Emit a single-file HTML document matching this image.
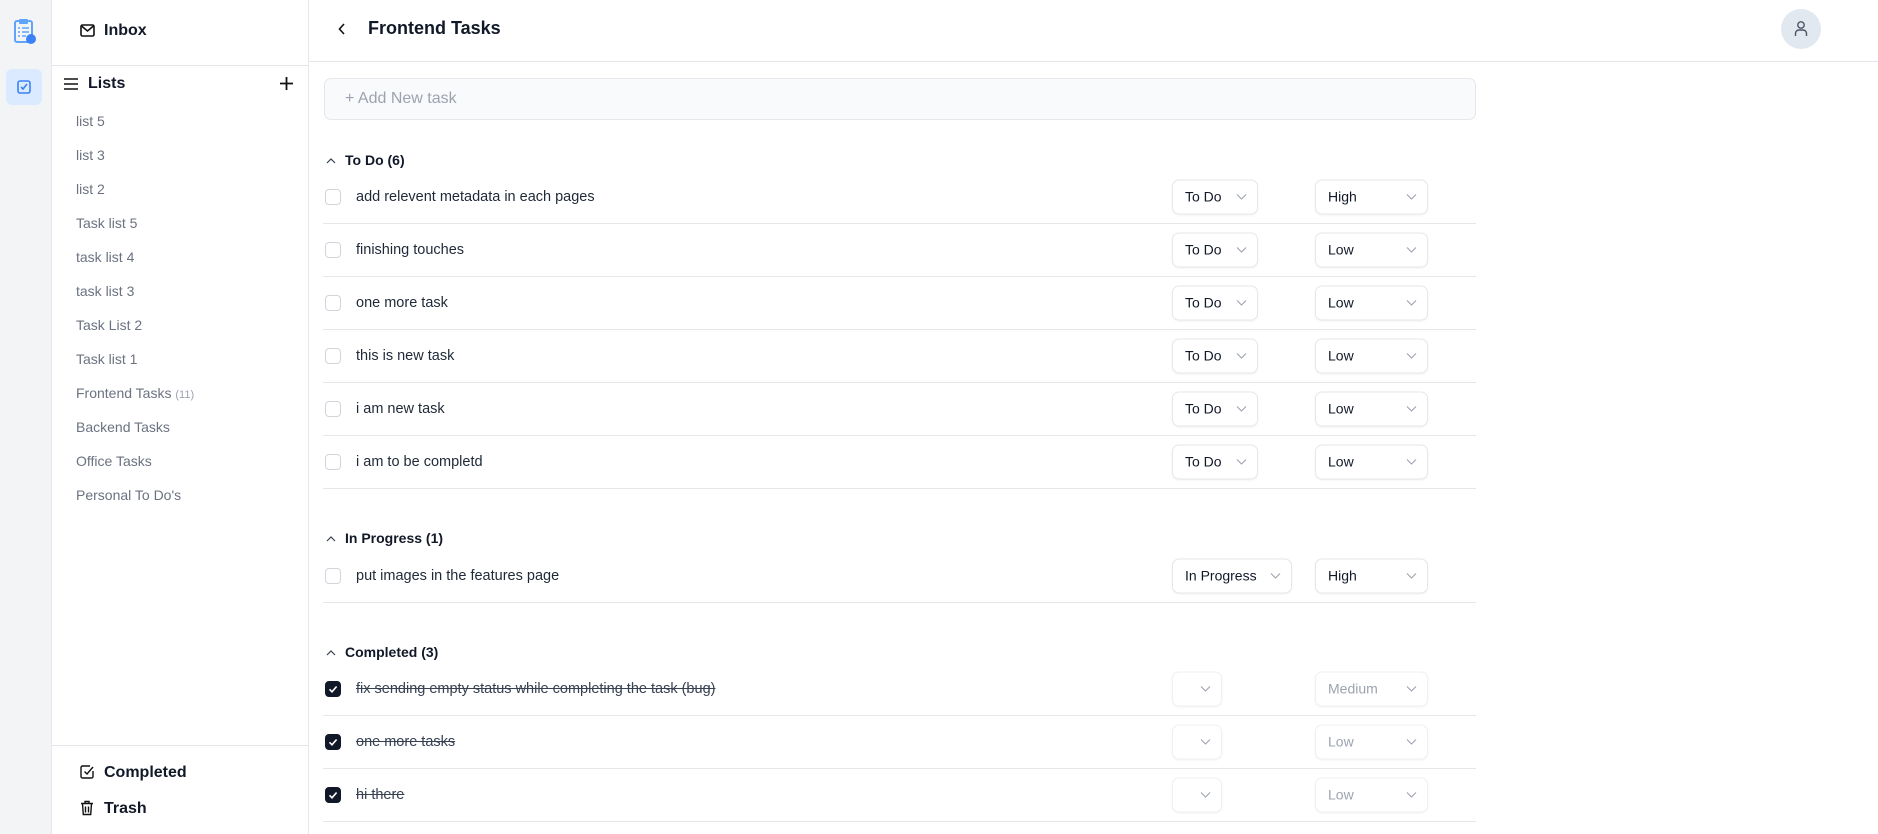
<!DOCTYPE html>
<html><head><meta charset="utf-8"><style>
*{box-sizing:border-box;margin:0;padding:0}
body{width:1878px;height:834px;overflow:hidden;background:#fff;font-family:"Liberation Sans",sans-serif;color:#111827;position:relative}
.abs{position:absolute}
.rail{left:0;top:0;width:52px;height:834px;background:#f3f4f6;border-right:1px solid #e5e7eb}
.side{left:52px;top:0;width:257px;height:834px;border-right:1px solid #e5e7eb;background:#fff}
.li{position:absolute;left:76px;font-size:14px;color:#6b7280;transform:translateY(-50%)}
.hr{position:absolute;height:1px;background:#e5e7eb}
.row{position:absolute;left:323px;width:1153px;height:53px}
.cb{position:absolute;left:2px;width:16px;height:16px;border:1px solid #d1d5db;border-radius:4px;top:50%;transform:translateY(-50%)}
.cb.on{background:#111827;border-color:#111827}
.txt{position:absolute;left:33px;top:50%;transform:translateY(-50%);font-size:14.5px;color:#1f2937}
.txt.done{text-decoration:line-through;color:#374151}
.sel{position:absolute;top:50%;transform:translateY(-50%);height:35px;border:1px solid #e5e7eb;border-radius:7px;font-size:14px;padding-left:12px;line-height:33px;box-shadow:0 1px 2px rgba(0,0,0,.05)}
.sel svg{position:absolute;right:10px;top:13px}
.sel.dim{color:#9ca3af;border-color:#eef0f2}
.gh{position:absolute;left:326px;font-size:14px;font-weight:bold;transform:translateY(-50%)}
.gh svg{margin-right:9px;vertical-align:1px}
</style></head><body>
<div class="abs rail"></div>
<svg class="abs" style="left:13px;top:17px" width="24" height="28" viewBox="0 0 24 28"><rect x="2" y="4" width="17" height="21" rx="2" fill="none" stroke="#60a5fa" stroke-width="2"/><rect x="6" y="2" width="9" height="5" rx="1" fill="#60a5fa"/><path d="M5 11h2M9 11h7M5 15h2M9 15h7M5 19h2M9 19h4" stroke="#60a5fa" stroke-width="1.5"/><circle cx="18" cy="22" r="5" fill="#3b82f6"/></svg>
<div class="abs" style="left:6px;top:69px;width:36px;height:36px;border-radius:6px;background:#dbeafe"></div>
<svg class="abs" style="left:16px;top:79px" width="16" height="16" viewBox="0 0 16 16"><rect x="2" y="2" width="12" height="12" rx="2" fill="none" stroke="#3b82f6" stroke-width="1.6"/><path d="M5 8l2 2 4-5" fill="none" stroke="#3b82f6" stroke-width="1.6"/></svg>
<div class="abs side"></div>
<svg class="abs" style="left:80px;top:24px" width="15" height="13" viewBox="0 0 15 13"><rect x="1" y="1" width="13" height="11" rx="1.5" fill="none" stroke="#111" stroke-width="1.6"/><path d="M1.5 2l6 5 6-5" fill="none" stroke="#111" stroke-width="1.6"/></svg>
<div class="abs" style="left:104px;top:22px;font-size:16px;font-weight:bold">Inbox</div>
<div class="hr" style="left:52px;top:65px;width:257px"></div>
<svg class="abs" style="left:64px;top:78px" width="14" height="12"><path d="M0 1h14M0 6h14M0 11h14" stroke="#111" stroke-width="1.6"/></svg>
<div class="abs" style="left:88px;top:75px;font-size:16px;font-weight:bold">Lists</div>
<svg class="abs" style="left:280px;top:77px" width="13" height="13"><path d="M6.5 0v13M0 6.5h13" stroke="#111" stroke-width="1.8"/></svg>
<div class="li" style="top:121px">list 5</div>
<div class="li" style="top:155px">list 3</div>
<div class="li" style="top:189px">list 2</div>
<div class="li" style="top:223px">Task list 5</div>
<div class="li" style="top:257px">task list 4</div>
<div class="li" style="top:291px">task list 3</div>
<div class="li" style="top:325px">Task List 2</div>
<div class="li" style="top:359px">Task list 1</div>
<div class="li" style="top:393px">Frontend Tasks <span style="font-size:11px;color:#9ca3af">(11)</span></div>
<div class="li" style="top:427px">Backend Tasks</div>
<div class="li" style="top:461px">Office Tasks</div>
<div class="li" style="top:495px">Personal To Do's</div>
<div class="hr" style="left:52px;top:745px;width:257px"></div>
<svg class="abs" style="left:80px;top:764px" width="15" height="15" viewBox="0 0 15 15"><path d="M13 7v5.5a1.5 1.5 0 0 1-1.5 1.5h-9A1.5 1.5 0 0 1 1 12.5v-9A1.5 1.5 0 0 1 2.5 2H10" fill="none" stroke="#111" stroke-width="1.4"/><path d="M4.5 7.5l2.5 2.5 6-7" fill="none" stroke="#111" stroke-width="1.4"/></svg>
<div class="abs" style="left:104px;top:764px;font-size:16px;font-weight:bold">Completed</div>
<svg class="abs" style="left:80px;top:800px" width="14" height="16" viewBox="0 0 14 16"><path d="M1 3.5h12M5 3.5V1.5h4v2M2.5 3.5l.8 11h7.4l.8-11M5.5 6.5v6M8.5 6.5v6" fill="none" stroke="#111" stroke-width="1.4"/></svg>
<div class="abs" style="left:104px;top:800px;font-size:16px;font-weight:bold">Trash</div>
<svg class="abs" style="left:338px;top:23px" width="8" height="12"><path d="M6 1L1.5 6 6 11" fill="none" stroke="#111" stroke-width="1.6"/></svg>
<div class="abs" style="left:368px;top:18px;font-size:18px;font-weight:bold">Frontend Tasks</div>
<div class="hr" style="left:309px;top:61px;width:1569px"></div>
<div class="abs" style="left:1781px;top:9px;width:40px;height:40px;border-radius:50%;background:#e2e8f0"></div>
<svg class="abs" style="left:1792px;top:20px" width="18" height="18" viewBox="0 0 18 18"><circle cx="9" cy="5" r="3.2" fill="none" stroke="#4b5563" stroke-width="1.4"/><path d="M3.5 16v-2.5a3.5 3.5 0 0 1 3.5-3.5h4a3.5 3.5 0 0 1 3.5 3.5V16" fill="none" stroke="#4b5563" stroke-width="1.4"/></svg>
<div class="abs" style="left:324px;top:78px;width:1152px;height:42px;border:1px solid #e5e7eb;border-radius:7px;background:#f9fafb;font-size:16px;color:#9ca3af;padding:11px 0 0 20px">+ Add New task</div>

<div class="gh" style="top:160px"><svg width="10" height="6"><path d="M1 5l4-4 4 4" fill="none" stroke="#374151" stroke-width="1.2"/></svg>To Do (6)</div>
<div class="gh" style="top:538px"><svg width="10" height="6"><path d="M1 5l4-4 4 4" fill="none" stroke="#374151" stroke-width="1.2"/></svg>In Progress (1)</div>
<div class="gh" style="top:652px"><svg width="10" height="6"><path d="M1 5l4-4 4 4" fill="none" stroke="#374151" stroke-width="1.2"/></svg>Completed (3)</div>

<div id="rows"></div>
<script>
var ch='<svg width="11" height="7"><path d="M1 1l4.5 4.5L10 1" fill="none" stroke="#9ca3af" stroke-width="1.1"/></svg>';
var R=[[196,"add relevent metadata in each pages","To Do","High",0],[249,"finishing touches","To Do","Low",0],[302,"one more task","To Do","Low",0],[355,"this is new task","To Do","Low",0],[408,"i am new task","To Do","Low",0],[461,"i am to be completd","To Do","Low",0],[575,"put images in the features page","In Progress","High",0],[688,"fix sending empty status while completing the task (bug)","","Medium",1],[741,"one more tasks","","Low",1],[794,"hi there","","Low",1]];
var h='';
R.forEach(function(r){
var sw=r[2]=="In Progress"?120:(r[4]?50:86);
h+='<div class="row" style="top:'+(r[0]-26)+'px"><div class="cb'+(r[4]?' on':'')+'">'+(r[4]?'<svg width="14" height="14" style="position:absolute;left:0;top:0"><path d="M3.5 7.3l2.5 2.5 4.6-5.3" fill="none" stroke="#fff" stroke-width="1.6"/></svg>':'')+'</div><div class="txt'+(r[4]?' done':'')+'">'+r[1]+'</div>'+
'<div class="sel'+(r[4]?' dim':'')+'" style="left:849px;width:'+sw+'px">'+r[2]+ch+'</div>'+
'<div class="sel'+(r[4]?' dim':'')+'" style="left:992px;width:113px">'+r[3]+ch+'</div></div>';
h+='<div class="hr" style="left:323px;width:1153px;top:'+(r[0]+27)+'px"></div>';
});
document.getElementById('rows').innerHTML=h;
</script>
</body></html>
